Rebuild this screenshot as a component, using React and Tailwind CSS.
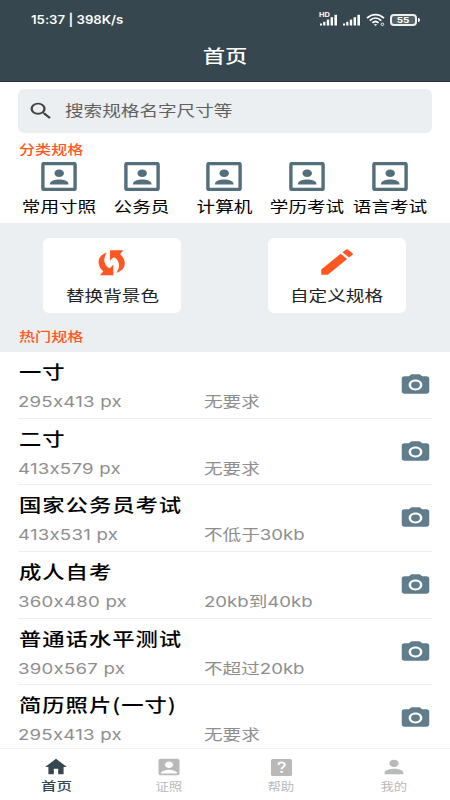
import React from "react";
import { MdSearch, MdCreate, MdCameraAlt, MdHome, MdAccountBox, MdPerson } from "react-icons/md";

const categories = ["常用寸照", "公务员", "计算机", "学历考试", "语言考试"];

const specs = [
    { name: "一寸", size: "295x413 px", limit: "无要求" },
    { name: "二寸", size: "413x579 px", limit: "无要求" },
    { name: "国家公务员考试", size: "413x531 px", limit: "不低于30kb" },
    { name: "成人自考", size: "360x480 px", limit: "20kb到40kb" },
    { name: "普通话水平测试", size: "390x567 px", limit: "不超过20kb" },
    { name: "简历照片(一寸)", size: "295x413 px", limit: "无要求" },
];

// Wide lettering, grows from the left edge
const Wide = ({ className = "", children }) => (
    <span className={`inline-block origin-left scale-x-[1.24] whitespace-nowrap ${className}`}>{children}</span>
);

// Wide lettering, grows from the centre
const WideCenter = ({ className = "", children }) => (
    <span className={`inline-block scale-x-[1.24] whitespace-nowrap ${className}`}>{children}</span>
);

const SignalIcon = ({ className }) => (
    <svg viewBox="0 0 18 12" className={className} fill="currentColor">
        <rect x="0" y="9.5" width="2" height="2" />
        <rect x="3.2" y="7.8" width="2.2" height="3.7" />
        <rect x="6.8" y="5.6" width="2.4" height="5.9" />
        <rect x="10.6" y="3.2" width="2.4" height="8.3" />
        <rect x="14.4" y="0.8" width="2.6" height="10.7" />
    </svg>
);

const WifiIcon = () => (
    <svg viewBox="0 0 20 14" className="h-[14px] w-[20px]" fill="none" stroke="currentColor" strokeWidth="1.8">
        <path d="M1 5.2C6 .3 13 .3 18 5.2" />
        <path d="M3.8 7.6c3.4-3.2 8-3.2 11.4 0" />
        <path d="M6.4 9.9c1.9-1.7 4.3-1.7 6.2 0" />
        <path d="M7.6 11.3h3.8l-1.9 1.7z" fill="currentColor" stroke="none" />
        <circle cx="16.4" cy="11.3" r="1.3" strokeWidth="0.9" />
    </svg>
);

const PortraitIcon = () => (
    <svg viewBox="0 0 36 29" className="h-[29px] w-[36px]" fill="#546e7a">
        <rect x="1.9" y="1.5" width="32.2" height="26" rx="1.2" fill="none" stroke="#546e7a" strokeWidth="3.4" />
        <ellipse cx="18.2" cy="11.2" rx="4.7" ry="3.8" />
        <path d="M9 22.6v-1.1c0-2.6 5-4.1 9.2-4.1s9.2 1.5 9.2 4.1v1.1z" />
    </svg>
);

const SwapIcon = () => (
    <svg viewBox="0 0 84 80" className="h-[27px] w-[28px]" fill="#ff5722">
        <path d="M27 10C9 15 0 28 2 42c1 11 7 19 14 24L6 78h40V47L35 57C17 50 14 28 27 10z" />
        <path
            transform="rotate(180 41 40.5)"
            d="M27 10C9 15 0 28 2 42c1 11 7 19 14 24L6 78h40V47L35 57C17 50 14 28 27 10z"
        />
    </svg>
);

const HelpIcon = () => (
    <svg viewBox="3 3 18 18" preserveAspectRatio="none" className="h-[17px] w-[21px]">
        <rect x="3" y="3" width="18" height="18" rx="1.6" fill="#b9b9b9" />
        <path d="M9.4 9.2c.2-3.4 5.4-3.3 5.4-.1 0 2-2.7 2.4-2.7 4.7" fill="none" stroke="#fff" strokeWidth="1.8" />
        <rect x="11.1" y="15.6" width="2" height="2.1" fill="#fff" />
    </svg>
);

const StatusBar = () => (
    <div className="flex h-[40px] items-center justify-between pl-[31px] pr-[30px]">
        <span className="inline-block origin-left scale-x-[1.1] whitespace-nowrap text-[12px] font-semibold">
            15:37 | 398K/s
        </span>
        <div className="flex items-center">
            <div className="relative mr-[5px]">
                <span className="absolute -left-px -top-[3px] origin-left scale-x-[1.24] text-[6px] font-bold leading-[8px]">HD</span>
                <SignalIcon className="h-[12px] w-[18px]" />
            </div>
            <SignalIcon className="mr-[5px] h-[12px] w-[18px]" />
            <WifiIcon />
            <div className="ml-[4px] flex h-[12px] w-[27px] items-center justify-center rounded-[4px] border-2 border-white/90 bg-white/15">
                <WideCenter className="text-[8px] font-bold leading-none">55</WideCenter>
            </div>
            <div className="ml-px h-[4px] w-[2px] rounded-r bg-white"></div>
        </div>
    </div>
);

const ActionCard = ({ icon, label }) => (
    <div className="flex h-[75px] w-[138px] flex-col items-center rounded-md bg-white pt-[10px]">
        <div className="flex h-[28px] items-center justify-center">{icon}</div>
        <WideCenter className="mt-[9px] text-[15px] leading-[22px] text-[#212121]">{label}</WideCenter>
    </div>
);

const SpecRow = ({ name, size, limit }) => (
    <div className="mx-[18px] flex h-[66.7px] shrink-0 items-center border-b border-[#eeeeee]">
        <div className="flex-1">
            <div className="h-[36px] pl-px pt-[4px] font-['Noto_Sans_CJK_SC',sans-serif] text-[18px] font-medium leading-[28px] tracking-[0.8px] text-black">
                <Wide>{name}</Wide>
            </div>
            <div className="flex h-[28px] text-[15px] leading-[26px] text-[#8e8e8e]">
                <div className="w-[186px] tracking-[0.2px]">
                    <Wide>{size}</Wide>
                </div>
                <Wide>{limit}</Wide>
            </div>
        </div>
        <MdCameraAlt preserveAspectRatio="none" className="h-[26px] w-[33px] text-[#607d8b]" />
    </div>
);

const Tab = ({ icon, label, active }) => (
    <div className={`flex flex-1 flex-col items-center pt-[6px] ${active ? "text-[#37474f]" : "text-[#b9b9b9]"}`}>
        <div className="flex h-[24px] items-center justify-center">{icon}</div>
        <WideCenter className={active ? "text-[12.5px] font-medium leading-[16px]" : "text-[10.8px] leading-[18px]"}>
            {label}
        </WideCenter>
    </div>
);

const App = () => {
    return (
        <div className="flex h-[800px] w-[450px] flex-col overflow-hidden bg-white font-['Inter','Noto_Sans_CJK_SC',sans-serif] [font-feature-settings:'calt'_0]">
            {/* Header */}
            <div className="h-[82px] shrink-0 border-b border-[#263238] bg-[#37474f] text-white">
                <StatusBar />
                <div className="flex h-[33px] items-center justify-center text-[18px] font-medium">
                    <WideCenter>首页</WideCenter>
                </div>
            </div>

            {/* Search and categories */}
            <div className="h-[141px] shrink-0 px-[18px] pt-[7px]">
                <div className="flex h-[44px] items-center rounded-md bg-[#eceff1] pl-[9px]">
                    <MdSearch preserveAspectRatio="none" className="h-[22px] w-[28px] text-[#424242]" />
                    <Wide className="ml-[10px] pt-px text-[15px] text-[#616161]">搜索规格名字尺寸等</Wide>
                </div>
                <div className="h-[29px] pl-[0.5px] pt-[8px] text-[13px] font-medium leading-[16px] text-[#ff5722]">
                    <Wide>分类规格</Wide>
                </div>
                <div className="grid grid-cols-5 pr-px">
                    {categories.map((item) => (
                        <div key={item} className="flex flex-col items-center">
                            <PortraitIcon />
                            <WideCenter className="mt-[5px] text-[15px] leading-[22px] text-black">{item}</WideCenter>
                        </div>
                    ))}
                </div>
            </div>

            {/* Actions */}
            <div className="h-[129px] shrink-0 bg-[#eceff1] pt-[15px]">
                <div className="grid grid-cols-2 justify-items-center pr-px">
                    <ActionCard icon={<SwapIcon />} label="替换背景色" />
                    <ActionCard
                        icon={<MdCreate preserveAspectRatio="none" className="h-[34px] w-[42px] text-[#ff5722]" />}
                        label="自定义规格"
                    />
                </div>
                <div className="pl-[19px] pt-[15px] text-[13px] font-medium leading-[16px] text-[#ff5722]">
                    <Wide>热门规格</Wide>
                </div>
            </div>

            {/* Spec list */}
            <div className="flex h-[396px] shrink-0 flex-col overflow-hidden">
                {specs.map((spec, i) => (
                    <SpecRow key={i} {...spec} />
                ))}
            </div>

            {/* Tab bar */}
            <div className="flex h-[52px] shrink-0 border-t border-[#f0f0f0] bg-white">
                <Tab active icon={<MdHome preserveAspectRatio="none" className="h-[22px] w-[26px]" />} label="首页" />
                <Tab icon={<MdAccountBox preserveAspectRatio="none" className="h-[22px] w-[28px]" />} label="证照" />
                <Tab icon={<HelpIcon />} label="帮助" />
                <Tab icon={<MdPerson preserveAspectRatio="none" className="h-[22px] w-[28px]" />} label="我的" />
            </div>
        </div>
    );
};

export default App;
